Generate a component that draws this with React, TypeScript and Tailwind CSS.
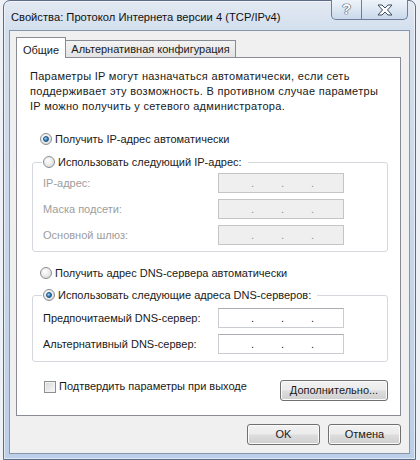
import type { ReactNode } from "react";

function Radio({ checked = false }: { checked?: boolean }) {
  return (
    <span className="w-[12px] h-[12px] shrink-0 rounded-full border border-[#8a8d91] bg-[radial-gradient(circle_at_40%_35%,#ffffff_0%,#e8e8e8_55%,#cdcdcd_100%)] flex items-center justify-center">
      {checked && (
        <span className="w-[6px] h-[6px] rounded-full border border-[#1d4f7f] bg-[radial-gradient(circle_at_35%_35%,#a6d8f6_0%,#2f78b8_60%,#17497d_100%)]" />
      )}
    </span>
  );
}

function Button({ children, className }: { children: ReactNode; className: string }) {
  return (
    <div
      className={
        "h-[21px] rounded-[3px] border border-[#707070] bg-[linear-gradient(#f2f2f2_0%,#ebebeb_48%,#dddddd_52%,#cfcfcf_100%)] shadow-[inset_0_0_0_1px_#fbfbfb] flex items-center justify-center text-[#1a1a1a] whitespace-nowrap " +
        className
      }
    >
      {children}
    </div>
  );
}

// IPv4 field: four empty octets split by dots
function IpField({ disabled = false }: { disabled?: boolean }) {
  return (
    <div
      className={
        disabled
          ? "w-[126px] h-[20px] border border-[#c5c5c5] bg-[#efefef] text-[#8f8f8f] flex items-center pl-[32px] leading-[18px]"
          : "w-[126px] h-[20px] border border-[#c9ccd1] border-t-[#abadb3] bg-white text-[#1a1a1a] flex items-center pl-[32px] leading-[18px]"
      }
    >
      <span className="w-[30px]">.</span>
      <span className="w-[30px]">.</span>
      <span className="w-[30px]">.</span>
    </div>
  );
}

function FieldRow({ label, disabled = false }: { label: string; disabled?: boolean }) {
  return (
    <div className="flex items-center h-[20px]">
      <span className={disabled ? "w-[175px] whitespace-nowrap text-[#9d9d9d]" : "w-[175px] whitespace-nowrap"}>
        {label}
      </span>
      <IpField disabled={disabled} />
    </div>
  );
}

export default function App() {
  return (
    <div className="w-[420px] h-[460px] overflow-hidden bg-[#eef1f5] pl-[3px] font-['Liberation_Sans',Arial,sans-serif] text-[11px] text-[#1a1a1a] whitespace-nowrap">
      <div className="w-[413px] h-[460px] rounded-t-[7px] border border-[#5c6c86] bg-[linear-gradient(180deg,#e2e9f2_0%,#d3dfee_30px,#bccfe8_100%)] shadow-[inset_0_0_0_1px_rgba(255,255,255,0.55)] flex flex-col">
        {/* title bar */}
        <div className="h-[29px] flex items-start">
          <span className="pl-[7px] pt-[8px] text-[11.2px] text-[#101010]">
            Свойства: Протокол Интернета версии 4 (TCP/IPv4)
          </span>
          <div className="ml-auto mr-[7px] h-[20px] -mt-[1px] flex rounded-b-[5px] border border-t-0 border-[#6e7e99] overflow-hidden bg-[linear-gradient(180deg,#eef3f9_0%,#dde7f3_50%,#c9d8eb_100%)]">
            <div className="w-[29px] flex items-center justify-center font-bold text-[15px] text-white [text-shadow:0_0_1px_#2f3b50,0_0_1px_#2f3b50,0_0_1px_#2f3b50]">
              ?
            </div>
            <div className="w-[46px] border-l border-[#6e7e99] flex items-center justify-center">
              <svg width="16" height="12" viewBox="0 0 16 12">
                <path
                  d="M1 1h4l3 3 3-3h4l-4.5 5 4.5 5h-4l-3-3-3 3H1l4.5-5z"
                  fill="#ffffff"
                  stroke="#3d4a60"
                  strokeWidth="1"
                  strokeLinejoin="round"
                />
              </svg>
            </div>
          </div>
        </div>

        {/* client area */}
        <div className="mx-[5px] h-[424px] border border-[#8796ad] bg-[#f0f0f0] flex flex-col">
          {/* tabs */}
          <div className="ml-[6px] mt-[6px] h-[20px] flex items-end">
            <div className="relative z-10 w-[50px] h-[21px] -mb-[1px] border border-b-0 border-[#898c95] bg-white flex items-start justify-center pt-[4px]">
              Общие
            </div>
            <div className="w-[170px] h-[17px] border border-b-0 border-l-0 border-[#898c95] bg-[linear-gradient(#f3f3f3,#e3e3e3)] flex items-center justify-center">
              Альтернативная конфигурация
            </div>
          </div>

          {/* tab page */}
          <div className="ml-[6px] mr-[8px] h-[359px] border border-[#898c95] bg-white flex flex-col">
            <p className="ml-[13px] mt-[11px] leading-[15px] tracking-[0.3px]">
              Параметры IP могут назначаться автоматически, если сеть
              <br />
              поддерживает эту возможность. В противном случае параметры
              <br />
              IP можно получить у сетевого администратора.
            </p>

            <div className="ml-[23px] mt-[17px] h-[16px] flex items-center gap-[3px]">
              <Radio checked />
              <span>Получить IP-адрес автоматически</span>
            </div>

            <fieldset className="ml-[15px] mt-[7px] w-[356px] rounded-[3px] border border-[#d5d9dd] pl-[10px] pb-[6px] flex flex-col">
              <legend className="-ml-[1px] px-[1px] pr-[6px] h-[16px] flex items-center gap-[3px]">
                <Radio />
                <span>Использовать следующий IP-адрес:</span>
              </legend>
              <div className="mt-[3px] flex flex-col gap-[6px]">
                <FieldRow label="IP-адрес:" disabled />
                <FieldRow label="Маска подсети:" disabled />
                <FieldRow label="Основной шлюз:" disabled />
              </div>
            </fieldset>

            <div className="ml-[23px] mt-[13px] h-[16px] flex items-center gap-[3px]">
              <Radio />
              <span>Получить адрес DNS-сервера автоматически</span>
            </div>

            <fieldset className="ml-[15px] mt-[6px] w-[356px] rounded-[3px] border border-[#d5d9dd] pl-[10px] pb-[7px] flex flex-col">
              <legend className="-ml-[1px] px-[1px] pr-[6px] h-[16px] flex items-center gap-[3px]">
                <Radio checked />
                <span>Использовать следующие адреса DNS-серверов:</span>
              </legend>
              <div className="mt-[5px] flex flex-col gap-[6px]">
                <FieldRow label="Предпочитаемый DNS-сервер:" />
                <FieldRow label="Альтернативный DNS-сервер:" />
              </div>
            </fieldset>

            <div className="mt-[18px] ml-[27px] mr-[12px] flex items-center justify-between">
              <div className="flex items-center gap-[3px] -mt-[8px]">
                <span className="w-[12px] h-[12px] border border-[#8f8f8f] bg-[linear-gradient(135deg,#d6d6d6,#fbfbfb)] shadow-[inset_0_0_0_1px_#f2f2f2]" />
                <span>Подтвердить параметры при выходе</span>
              </div>
              <Button className="w-[108px]">Дополнительно...</Button>
            </div>
          </div>

          {/* dialog buttons */}
          <div className="mt-[8px] mr-[8px] flex justify-end gap-[8px]">
            <Button className="w-[73px]">OK</Button>
            <Button className="w-[73px]">Отмена</Button>
          </div>
        </div>
      </div>
    </div>
  );
}
